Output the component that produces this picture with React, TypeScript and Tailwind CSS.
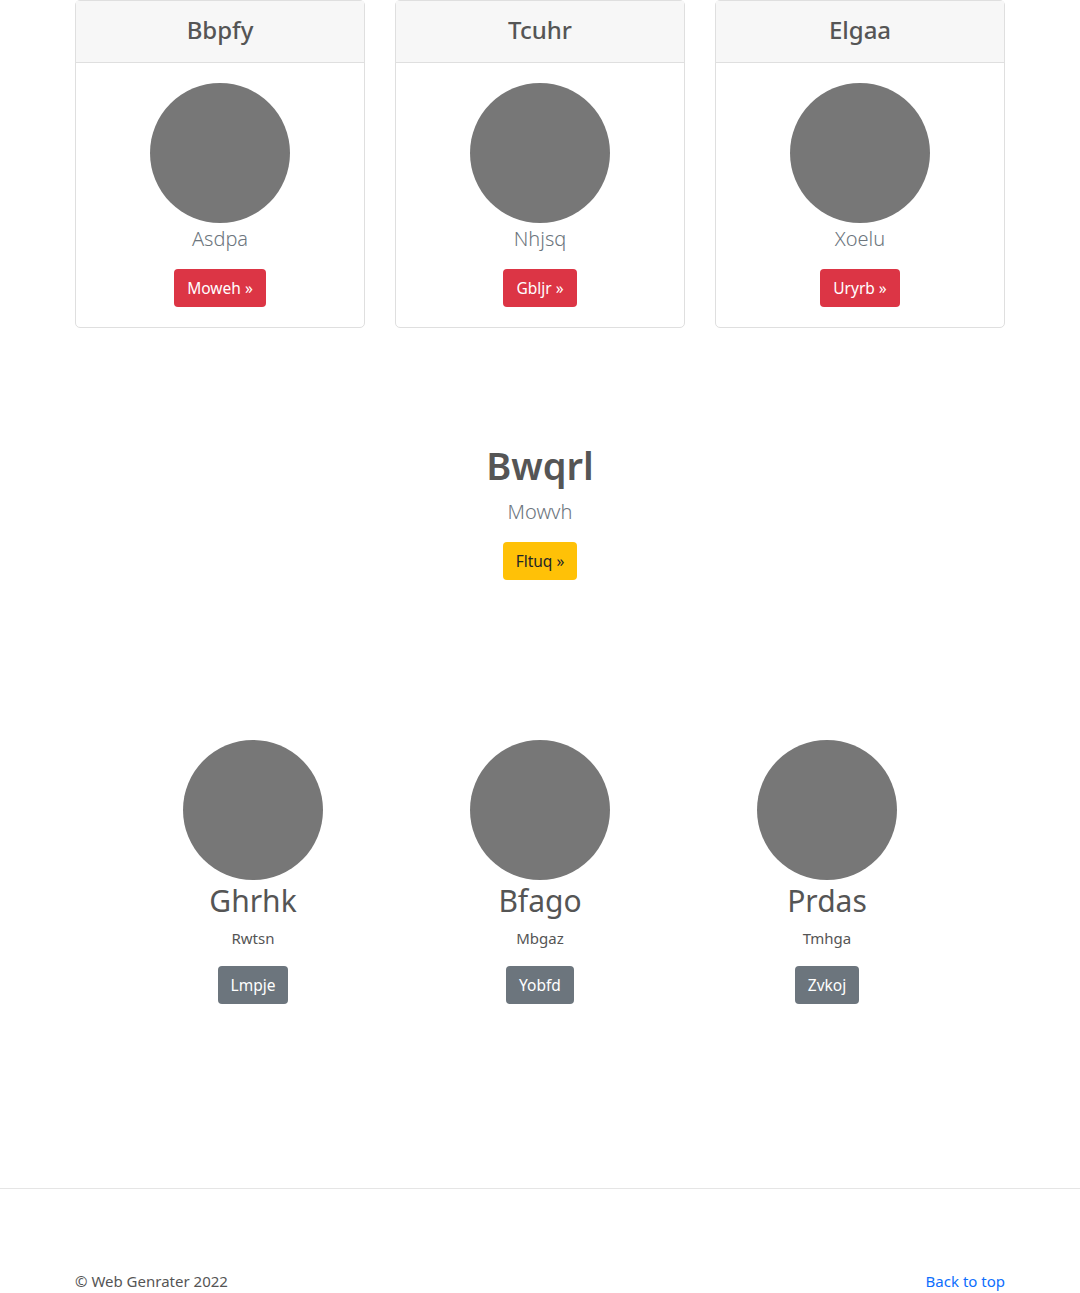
const cards = [
  { title: 'Bbpfy', name: 'Asdpa', btn: 'Moweh' },
  { title: 'Tcuhr', name: 'Nhjsq', btn: 'Gbljr' },
  { title: 'Elgaa', name: 'Xoelu', btn: 'Uryrb' },
];

const people = [
  { name: 'Ghrhk', sub: 'Rwtsn', btn: 'Lmpje' },
  { name: 'Bfago', sub: 'Mbgaz', btn: 'Yobfd' },
  { name: 'Prdas', sub: 'Tmhga', btn: 'Zvkoj' },
];

export default function App() {
  return (
    <div className="min-h-[1293px] bg-white text-[#212529] font-['Noto_Sans','Open_Sans',sans-serif]">
      <div className="w-[930px] mx-auto">
        {/* pricing style cards */}
        <div className="grid grid-cols-3 gap-[30px]">
          {cards.map((c) => (
            <div key={c.title} className="border border-[#dfdfdf] rounded-[5px] text-center">
              <div className="h-[62px] pb-[3px] bg-[#f7f7f7] border-b border-[#dfdfdf] flex items-center justify-center">
                <h4 className="text-[24px] font-medium text-[#555]">{c.title}</h4>
              </div>
              <div className="pt-5 pb-5 flex flex-col items-center">
                <div className="w-[140px] h-[140px] rounded-full bg-[#777]" />
                <p className="text-[20px] leading-[30px] font-light text-[#6c757d] mt-px">{c.name}</p>
                <a className="mt-[15px] inline-block bg-[#dc3545] text-white text-[15.5px] leading-[24px] px-[13px] py-[7px] rounded-[4px]">
                  {c.btn} »
                </a>
              </div>
            </div>
          ))}
        </div>

        {/* hero */}
        <div className="mt-[113px] flex flex-col items-center text-center">
          <h1 className="text-[38px] leading-[48px] font-semibold text-[#555]">Bwqrl</h1>
          <p className="text-[20px] leading-[30px] font-light text-[#6c757d] mt-[8px]">Mowvh</p>
          <a className="mt-[15px] inline-block bg-[#ffc107] text-[#212529] text-[15.5px] leading-[24px] px-[13px] py-[7px] rounded-[4px]">
            Fltuq »
          </a>
        </div>
      </div>

      {/* marketing */}
      <div className="w-[861px] mx-auto mt-[160px] grid grid-cols-3">
        {people.map((p) => (
          <div key={p.name} className="flex flex-col items-center text-center">
            <div className="w-[140px] h-[140px] rounded-full bg-[#777]" />
            <h2 className="text-[30px] leading-[38px] font-normal text-[#555] mt-[2px]">{p.name}</h2>
            <p className="text-[15px] leading-[24px] text-[#555] mt-[6px]">{p.sub}</p>
            <a className="mt-4 inline-block bg-[#6c757d] text-white text-[15.5px] leading-[24px] px-[13px] py-[7px] rounded-[4px]">
              {p.btn}
            </a>
          </div>
        ))}
      </div>

      <footer className="mt-[184px] border-t border-[#e5e5e5]">
        <div className="w-[930px] mx-auto flex justify-between items-center pt-[80px] text-[15px] leading-[24px]">
          <p className="text-[#555]">© Web Genrater 2022</p>
          <a className="text-[#0d6efd]">Back to top</a>
        </div>
      </footer>
    </div>
  );
}
